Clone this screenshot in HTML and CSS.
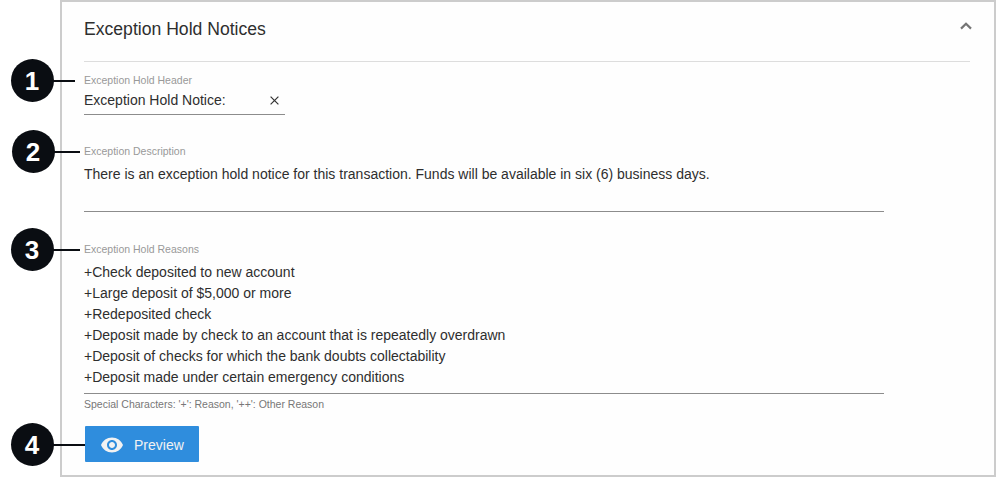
FILE: index.html
```
<!DOCTYPE html>
<html lang="en">
<head>
    <meta charset="UTF-8">
    <meta name="viewport" content="width=device-width, initial-scale=1.0">
    <title>Exception Hold Notices</title>
    <link rel="stylesheet" href="styles.css">
</head>
<body>
    <div class="panel">
        <div class="panel-header">
            <h1>Exception Hold Notices</h1>
            <svg class="chevron" width="12" height="8" viewBox="0 0 12 8"><path d="M1 6.6 L6 1.8 L11 6.6" fill="none" stroke="#757575" stroke-width="2.2"/></svg>
        </div>

        <div class="field header-field">
            <span class="marker marker-1">1</span>
            <label>Exception Hold Header</label>
            <div class="input">
                <span>Exception Hold Notice:</span>
                <svg class="clear" width="9" height="9" viewBox="0 0 9 9"><path d="M0.6 0.6 L8.4 8.4 M8.4 0.6 L0.6 8.4" stroke="#333" stroke-width="1.2"/></svg>
            </div>
        </div>

        <div class="field description-field">
            <span class="marker marker-2">2</span>
            <label>Exception Description</label>
            <div class="textarea">There is an exception hold notice for this transaction. Funds will be available in six (6) business days.</div>
        </div>

        <div class="field reasons-field">
            <span class="marker marker-3">3</span>
            <label>Exception Hold Reasons</label>
            <div class="textarea">+Check deposited to new account<br>
                +Large deposit of $5,000 or more<br>
                +Redeposited check<br>
                +Deposit made by check to an account that is repeatedly overdrawn<br>
                +Deposit of checks for which the bank doubts collectability<br>
                +Deposit made under certain emergency conditions</div>
            <div class="hint">Special Characters: '+': Reason, '++': Other Reason</div>
        </div>

        <div class="actions">
            <span class="marker marker-4">4</span>
            <button class="preview">
                <svg width="24" height="24" viewBox="0 0 24 24"><path fill="#f2f2f2" d="M12 4.5C7 4.5 2.73 7.61 1 12c1.73 4.39 6 7.5 11 7.5s9.27-3.11 11-7.5c-1.73-4.39-6-7.5-11-7.5zM12 17c-2.76 0-5-2.24-5-5s2.24-5 5-5 5 2.24 5 5-2.24 5-5 5zm0-8c-1.66 0-3 1.34-3 3s1.34 3 3 3 3-1.34 3-3-1.34-3-3-3z"/></svg>
                <span>Preview</span>
            </button>
        </div>
    </div>
</body>
</html>
```
FILE: styles.css
```
* {
    box-sizing: border-box;
}
body {
    margin: 0;
    background-color: #fff;
    color: #2e2e2e;
    font-family: "Liberation Sans", Arial, sans-serif;
    font-size: 14px;
}
.panel {
    height: 477px;
    margin-left: 60px;
    padding: 0 24px 0 22px;
    border: 2px solid #ccc;
    background-color: #fefefe;
}
.panel-header {
    display: flex;
    justify-content: space-between;
    align-items: center;
    height: 60px;
    padding-bottom: 5px;
    border-bottom: 1px solid #ddd;
}
h1 {
    margin: 0;
    font-size: 17.6px;
    font-weight: normal;
}
.chevron {
    margin: 0 -2px 7px 0;
}
.field,
.actions {
    position: relative;
}
.field {
    width: 800px;
}
.header-field {
    width: 201px;
    padding-top: 11px;
}
.description-field {
    padding-top: 29px;
}
.reasons-field {
    padding-top: 30px;
}
label {
    display: block;
    height: 14px;
    color: #999;
    font-size: 10.5px;
    line-height: 14px;
}
.input {
    display: flex;
    justify-content: space-between;
    height: 28px;
    padding: 3px 6px 0 0;
    border-bottom: 1px solid #8c8c8c;
    line-height: 21px;
}
.clear {
    margin-top: 6px;
}
.textarea {
    padding-top: 6px;
    border-bottom: 1px solid #8c8c8c;
    line-height: 21px;
}
.description-field .textarea {
    height: 54px;
}
.reasons-field .textarea {
    height: 138px;
}
.hint {
    padding-top: 3px;
    color: #777;
    font-size: 10.5px;
    line-height: 14px;
}
.actions {
    padding: 15px 0 0 1px;
}
.preview {
    display: flex;
    align-items: center;
    width: 114px;
    height: 36px;
    padding: 2px 0 0 15px;
    border: none;
    border-radius: 1px;
    background-color: #2f8ddd;
    color: #f2f2f2;
    font-family: inherit;
    font-size: 14px;
    cursor: pointer;
}
.preview span {
    margin-left: 10px;
}

/* numbered callouts, each with a line leading to its field */
.marker {
    position: absolute;
    left: -73px;
    width: 43px;
    height: 43px;
    padding-right: 1px;
    border-radius: 50%;
    background-color: #0a0d12;
    color: #fff;
    font-size: 26px;
    font-weight: bold;
    line-height: 45px;
    text-align: center;
}
.marker::after {
    content: "";
    position: absolute;
    top: 21px;
    left: 42px;
    width: 27px;
    height: 2px;
    background-color: #0a0d12;
}
.marker-1 {
    top: -3px;
}
.marker-1::after {
    width: 22px;
}
.marker-2 {
    top: 15px;
    left: -72px;
}
.marker-2::after {
    width: 26px;
}
.marker-3 {
    top: 16px;
}
.marker-4 {
    top: 12px;
}
.marker-4::after {
    width: 32px;
}
```
